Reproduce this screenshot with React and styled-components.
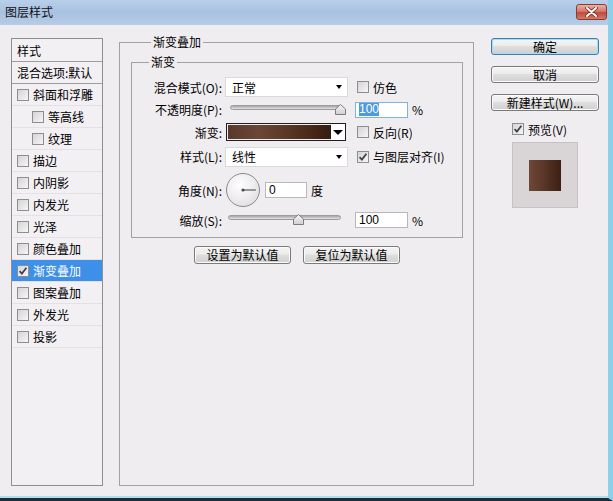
import styled, { createGlobalStyle } from "styled-components";

const GlobalStyle = createGlobalStyle`
  html, body {
    margin: 0;
    padding: 0;
  }
  body {
    font-family: "Noto Sans CJK SC", "Noto Sans", "Liberation Sans", sans-serif;
    font-size: 12px;
    color: #000;
  }
`;

const listItems = [
    { label: "斜面和浮雕" },
    { label: "等高线", indent: true },
    { label: "纹理", indent: true },
    { label: "描边" },
    { label: "内阴影" },
    { label: "内发光" },
    { label: "光泽" },
    { label: "颜色叠加" },
    { label: "渐变叠加", checked: true, active: true },
    { label: "图案叠加" },
    { label: "外发光" },
    { label: "投影" },
];

const CheckBox = ({ checked }) => (
    <SCheck>
        {checked && (
            <svg width="10" height="10" viewBox="0 0 10 10">
                <path d="M1.6 5.2 L3.9 7.6 L8.4 1.8" fill="none" stroke="#3b3f4a" strokeWidth="1.7" />
            </svg>
        )}
    </SCheck>
);

const Select = ({ value }) => (
    <SSelect>
        <span>{value}</span>
        <SArrow />
    </SSelect>
);

const Slider = ({ width, left, thumb }) => (
    <SSlider style={{ width }} $left={left}>
        <STrack />
        <SThumb style={{ left: thumb }} width="11" height="11" viewBox="0 0 11 11">
            <defs>
                <linearGradient id="thumbFill" x1="0" y1="0" x2="0" y2="1">
                    <stop offset="0" stopColor="#f7f7f7" />
                    <stop offset="1" stopColor="#cfcfcf" />
                </linearGradient>
            </defs>
            <path d="M5.5 0.5 L10.5 5 L10.5 10.5 L0.5 10.5 L0.5 5 Z" fill="url(#thumbFill)" stroke="#7d7d7d" />
        </SThumb>
    </SSlider>
);

const Dial = () => (
    <svg width="36" height="36" viewBox="0 0 36 36">
        <defs>
            <radialGradient id="dialFill" cx="0.4" cy="0.35" r="0.7">
                <stop offset="0" stopColor="#ffffff" />
                <stop offset="1" stopColor="#e2dfe3" />
            </radialGradient>
        </defs>
        <circle cx="18" cy="18" r="16.5" fill="url(#dialFill)" stroke="#8a8a8a" />
        <line x1="18" y1="18" x2="31" y2="18" stroke="#5a5a5a" strokeWidth="1.2" />
        <circle cx="18" cy="18" r="1.6" fill="#4a4a4a" />
    </svg>
);

export default function App() {
    return (
        <>
            <GlobalStyle />
            <SWindow>
                <STitleBar>
                    <STitle>图层样式</STitle>
                    <SClose>
                        <svg width="13" height="10" viewBox="0 0 13 10">
                            <path d="M2 1 L11 9 M11 1 L2 9" stroke="#7a2a20" strokeWidth="3.6" strokeLinecap="round" />
                            <path d="M2 1 L11 9 M11 1 L2 9" stroke="#ffffff" strokeWidth="2" strokeLinecap="round" />
                        </svg>
                    </SClose>
                </STitleBar>

                <SBody>
                    <SList>
                        <SListHeader $h={22}>样式</SListHeader>
                        <SListHeader $h={21}>混合选项:默认</SListHeader>
                        {listItems.map((item) => (
                            <SListItem key={item.label} $indent={item.indent} $active={item.active}>
                                <CheckBox checked={item.checked} />
                                {item.label}
                            </SListItem>
                        ))}
                    </SList>

                    <SOuterGroup>
                        <SLegend $offset={20}>渐变叠加</SLegend>
                        <SInnerGroup>
                            <SLegend $offset={17}>渐变</SLegend>

                            <SRow $h={22}>
                                <SLabel>混合模式(O):</SLabel>
                                <Select value="正常" />
                                <SCheckLabel>
                                    <CheckBox />
                                    仿色
                                </SCheckLabel>
                            </SRow>

                            <SRow $h={23}>
                                <SLabel>不透明度(P):</SLabel>
                                <Slider width={113} left={5} thumb={105} />
                                <SFieldWrap>
                                    <SNumber $w={53} $focus>
                                        <SSelected>100</SSelected>
                                    </SNumber>
                                    %
                                </SFieldWrap>
                            </SRow>

                            <SRow $h={22}>
                                <SLabel>渐变:</SLabel>
                                <SGradientPicker>
                                    <SGradientBar />
                                    <SDrop>
                                        <SArrow $big />
                                    </SDrop>
                                </SGradientPicker>
                                <SCheckLabel>
                                    <CheckBox />
                                    反向(R)
                                </SCheckLabel>
                            </SRow>

                            <SRow $h={27}>
                                <SLabel>样式(L):</SLabel>
                                <Select value="线性" />
                                <SCheckLabel>
                                    <CheckBox checked />
                                    与图层对齐(I)
                                </SCheckLabel>
                            </SRow>

                            <SRow $h={40}>
                                <SLabel>角度(N):</SLabel>
                                <SAngle>
                                    <Dial />
                                    <SNumber $w={42}>0</SNumber>
                                    度
                                </SAngle>
                            </SRow>

                            <SRow $h={20}>
                                <SLabel>缩放(S):</SLabel>
                                <Slider width={113} left={3} thumb={65} />
                                <SFieldWrap>
                                    <SNumber $w={53}>100</SNumber>
                                    %
                                </SFieldWrap>
                            </SRow>
                        </SInnerGroup>

                        <SGroupButtons>
                            <SButton $w={97} $h={18}>设置为默认值</SButton>
                            <SButton $w={97} $h={18}>复位为默认值</SButton>
                        </SGroupButtons>
                    </SOuterGroup>

                    <SSide>
                        <SSideButtons>
                            <SButton $w={108} $h={17} $primary>确定</SButton>
                            <SButton $w={108} $h={17}>取消</SButton>
                            <SButton $w={108} $h={17}>新建样式(W)...</SButton>
                        </SSideButtons>
                        <SPreviewCheck>
                            <CheckBox checked />
                            预览(V)
                        </SPreviewCheck>
                        <SPreview>
                            <SPreviewSwatch />
                        </SPreview>
                    </SSide>
                </SBody>
            </SWindow>
        </>
    );
}

const SWindow = styled.div`
    width: 613px;
    height: 501px;
    box-sizing: border-box;
    display: flex;
    flex-direction: column;
    background: #f0edf1;
    border-right: 5px solid #8cd1ec;
    border-bottom: 3px solid #1d2c35;
    overflow: hidden;
`;

const STitleBar = styled.div`
    height: 25px;
    flex: none;
    display: flex;
    align-items: flex-start;
    justify-content: space-between;
    padding: 0 1px 0 5px;
    background: linear-gradient(to bottom, #b9cfe9 0%, #a9c2e1 50%, #b6cce7 100%);
`;

const STitle = styled.span`
    line-height: 24px;
    font-size: 12px;
    color: #111;
`;

const SClose = styled.div`
    width: 31px;
    height: 16px;
    margin-top: 4px;
    box-sizing: border-box;
    display: flex;
    align-items: center;
    justify-content: center;
    border: 1px solid #8b3b31;
    border-radius: 3px;
    background: linear-gradient(to bottom, #eab0a5 0%, #d6786a 45%, #c3493a 55%, #d27b66 100%);
`;

const SBody = styled.div`
    flex: 1;
    min-height: 0;
    display: flex;
    align-items: stretch;
    padding: 9px 0 10px 11px;
    border-bottom: 2px solid #a9ddf0;
`;

const SList = styled.div`
    width: 92px;
    flex: none;
    box-sizing: border-box;
    margin-top: 4px;
    border: 1px solid #8f8f8f;
    background: #f3f0f4;
`;

const SListHeader = styled.div`
    height: ${(p) => p.$h}px;
    display: flex;
    align-items: center;
    padding-left: 5px;
    border-bottom: 1px solid #9d9d9d;
    white-space: nowrap;
`;

const SListItem = styled.div`
    height: 21px;
    display: flex;
    align-items: center;
    gap: 4px;
    padding-left: ${(p) => (p.$indent ? 20 : 5)}px;
    border-bottom: 1px solid #e4e0e5;
    background: ${(p) => (p.$active ? "#3d8fe8" : "transparent")};
    color: ${(p) => (p.$active ? "#fff" : "#000")};
    white-space: nowrap;
`;

const SCheck = styled.span`
    flex: none;
    width: 12px;
    height: 12px;
    box-sizing: border-box;
    display: inline-flex;
    align-items: center;
    justify-content: center;
    border: 1px solid #8e8e8e;
    background: linear-gradient(135deg, #d4d4d4 0%, #f6f6f6 100%);
`;

const SOuterGroup = styled.fieldset`
    width: 355px;
    flex: none;
    box-sizing: border-box;
    margin: 0 17px 0 16px;
    padding: 4px 10px 0 11px;
    border: 1px solid #a2a2a2;
    min-width: 0;
`;

const SInnerGroup = styled.fieldset`
    width: 332px;
    box-sizing: border-box;
    margin: 0;
    padding: 6px 0 7px 0;
    border: 1px solid #a2a2a2;
    min-width: 0;
`;

const SLegend = styled.legend`
    margin-left: ${(p) => p.$offset}px;
    padding: 0 2px;
    line-height: 16px;
    font-size: 12px;
`;

const SRow = styled.div`
    height: ${(p) => p.$h}px;
    display: grid;
    grid-template-columns: 93px 128px 1fr;
    align-items: center;
`;

const SLabel = styled.span`
    text-align: right;
    padding-right: 3px;
    white-space: nowrap;
`;

const SSelect = styled.div`
    width: 123px;
    height: 20px;
    box-sizing: border-box;
    display: flex;
    align-items: center;
    justify-content: space-between;
    padding: 0 5px 0 6px;
    background: #fff;
    border: 1px solid #dadada;
`;

const SArrow = styled.span`
    width: 0;
    height: 0;
    border-left: ${(p) => (p.$big ? 5 : 3.5)}px solid transparent;
    border-right: ${(p) => (p.$big ? 5 : 3.5)}px solid transparent;
    border-top: ${(p) => (p.$big ? 5 : 4)}px solid #000;
`;

const SCheckLabel = styled.label`
    display: flex;
    align-items: center;
    gap: 4px;
    margin-left: 4px;
    white-space: nowrap;
`;

const SSlider = styled.div`
    position: relative;
    height: 14px;
    margin-left: ${(p) => p.$left}px;
`;

const STrack = styled.div`
    position: absolute;
    left: 0;
    right: 0;
    top: 2px;
    height: 5px;
    box-sizing: border-box;
    border: 1px solid #9c9c9c;
    border-radius: 3px;
    background: linear-gradient(to bottom, #a6a6a6, #e4e4e4);
`;

const SThumb = styled.svg`
    position: absolute;
    top: 1px;
`;

const SFieldWrap = styled.div`
    display: flex;
    align-items: center;
    gap: 4px;
    margin-left: 2px;
`;

const SNumber = styled.span`
    width: ${(p) => p.$w}px;
    height: 16px;
    box-sizing: border-box;
    display: inline-flex;
    align-items: center;
    padding-left: 3px;
    background: #fff;
    border: 1px solid ${(p) => (p.$focus ? "#7fb2e0" : "#b8b8bc")};
    font-family: "Liberation Sans", "Noto Sans", sans-serif;
    font-size: 12px;
`;

const SSelected = styled.span`
    background: #4d9ade;
    color: #fff;
    line-height: 13px;
`;

const SGradientPicker = styled.div`
    width: 120px;
    height: 18px;
    box-sizing: border-box;
    display: flex;
    margin-left: 1px;
    border: 1px solid #1e1e1e;
`;

const SGradientBar = styled.div`
    flex: 1;
    margin: 1px;
    background: linear-gradient(to right, #5a392c 0%, #6c4636 30%, #52301f 70%, #361c12 100%);
    border-right: 1px solid #1e1e1e;
    margin-right: 0;
`;

const SDrop = styled.div`
    width: 14px;
    display: flex;
    align-items: center;
    justify-content: center;
    background: #fff;
`;

const SAngle = styled.div`
    display: flex;
    align-items: center;
    gap: 4px;
    white-space: nowrap;
`;

const SGroupButtons = styled.div`
    display: flex;
    justify-content: center;
    gap: 12px;
    margin-top: 8px;
`;

const SButton = styled.button`
    width: ${(p) => p.$w}px;
    height: ${(p) => p.$h}px;
    box-sizing: border-box;
    padding: 0;
    border: 1px solid ${(p) => (p.$primary ? "#3c7fb1" : "#7a7a7a")};
    border-radius: 3px;
    background: linear-gradient(to bottom, #f4f4f4 0%, #ececec 45%, #dedede 50%, #d0d0d0 100%);
    box-shadow: ${(p) => (p.$primary ? "inset 0 0 0 1px #a8dcf5" : "inset 0 0 0 1px #fbfbfb")};
    font-family: inherit;
    font-size: 12px;
    line-height: 14px;
    color: #000;
    white-space: nowrap;
`;

const SSide = styled.div`
    width: 108px;
    flex: none;
    display: flex;
    flex-direction: column;
    margin-top: 4px;
`;

const SSideButtons = styled.div`
    display: flex;
    flex-direction: column;
    gap: 11px;
`;

const SPreviewCheck = styled.label`
    height: 14px;
    display: flex;
    align-items: center;
    gap: 4px;
    margin-top: 11px;
    padding-left: 21px;
`;

const SPreview = styled.div`
    width: 66px;
    height: 66px;
    box-sizing: border-box;
    margin: 6px 0 0 21px;
    display: flex;
    align-items: center;
    justify-content: center;
    background: #d9d5d7;
    border: 1px solid #c6c2c4;
`;

const SPreviewSwatch = styled.div`
    width: 32px;
    height: 31px;
    background: linear-gradient(to right, #6e4838 0%, #5d392a 40%, #4c2b1e 70%, #3b2016 100%);
`;
